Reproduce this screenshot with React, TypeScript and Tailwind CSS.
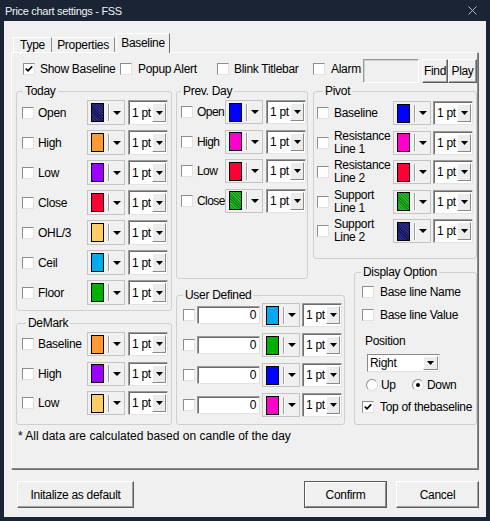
import React from "react";

type Sw =
  | "navy"
  | "orange"
  | "purple"
  | "red"
  | "peach"
  | "sky"
  | "green"
  | "greenDot"
  | "blue"
  | "magenta";

const SWATCH: Record<Sw, string> = {
  navy: "bg-[repeating-linear-gradient(45deg,#2c2c8c_0px,#2c2c8c_1px,#16164e_1px,#16164e_2px)]",
  orange: "bg-[#ff9a33]",
  purple: "bg-[#9900ff]",
  red: "bg-[#ff0033]",
  peach: "bg-[#ffcc66]",
  sky: "bg-[#00aaee]",
  green: "bg-[#00b000]",
  greenDot: "bg-[repeating-linear-gradient(45deg,#2cb42c_0px,#2cb42c_1px,#0c8c0c_1px,#0c8c0c_2px)]",
  blue: "bg-[#0000ff]",
  magenta: "bg-[#ff00cc]",
};

function Check({ on = false }: { on?: boolean }) {
  return (
    <span className="flex h-[12px] w-[12px] shrink-0 items-center justify-center border border-t-[#8d8d8d] border-l-[#8d8d8d] border-r-[#e3e3e3] border-b-[#e3e3e3] bg-white">
      {on && (
        <svg width="8" height="8" viewBox="0 0 8 8">
          <path d="M0.8 3.6L3 5.8L7.2 1.4" fill="none" stroke="#000" strokeWidth="1.7" />
        </svg>
      )}
    </span>
  );
}

function Radio({ on = false }: { on?: boolean }) {
  return (
    <span className="flex h-[12px] w-[12px] shrink-0 items-center justify-center rounded-full border border-t-[#8d8d8d] border-l-[#8d8d8d] border-r-[#e3e3e3] border-b-[#e3e3e3] bg-white">
      {on && <span className="h-[4px] w-[4px] rounded-full bg-black" />}
    </span>
  );
}

function DownArrow() {
  return (
    <svg width="7" height="4" viewBox="0 0 7 4">
      <path d="M0 0H7L3.5 4Z" fill="#000" />
    </svg>
  );
}

function ColorPick({ c }: { c: Sw }) {
  return (
    <div className="flex h-full w-[38px] shrink-0 items-center border border-[#c3c3c3] pl-[3px]">
      <span className={`h-[19px] w-[13px] shrink-0 border border-black ${SWATCH[c]}`} />
      <span className="ml-[4px] h-[17px] w-[2px] shrink-0 border-l border-l-[#a0a0a0] bg-white" />
      <svg className="ml-[3px] shrink-0" width="8" height="4" viewBox="0 0 8 4">
        <path d="M0 0H8L4 4Z" fill="#000" />
      </svg>
    </div>
  );
}

function WidthBox({ className = "" }: { className?: string }) {
  return (
    <div
      className={`flex h-full w-[40px] shrink-0 border border-t-[#9a9a9a] border-l-[#9a9a9a] border-r-[#e3e3e3] border-b-[#e3e3e3] bg-white shadow-[inset_1px_1px_0_#6d6d6d] ${className}`}
    >
      <span className="min-w-0 flex-1 self-center overflow-hidden whitespace-nowrap pl-[3px]">1 pt</span>
      <span className="my-[2px] mr-[1px] flex w-[14px] shrink-0 items-center justify-center border border-t-white border-l-white border-r-[#8a8a8a] border-b-[#8a8a8a] bg-[#ececec]">
        <DownArrow />
      </span>
    </div>
  );
}

function Group({
  title,
  indent,
  className,
  children,
}: {
  title: string;
  indent: string;
  className: string;
  children: React.ReactNode;
}) {
  return (
    <fieldset className={`shrink-0 rounded-[3px] border border-[#cfcfcf] ${className}`}>
      <legend className={`px-[2px] leading-[14px] ${indent}`}>{title}</legend>
      {children}
    </fieldset>
  );
}

function WinButton({ label, className = "", primary = false }: { label: string; className?: string; primary?: boolean }) {
  return (
    <div
      className={`flex shrink-0 items-center justify-center ${
        primary ? "border border-[#5a5a5a]" : "border border-t-white border-l-white border-r-[#5f5f5f] border-b-[#5f5f5f]"
      } ${className}`}
    >
      <div
        className={`flex h-full w-full items-center justify-center bg-[#f0f0f0] ${
          primary
            ? "border border-t-white border-l-white border-r-[#8a8a8a] border-b-[#8a8a8a]"
            : "shadow-[inset_-1px_-1px_0_#a0a0a0]"
        }`}
      >
        {label}
      </div>
    </div>
  );
}

const today: [string, Sw][] = [
  ["Open", "navy"],
  ["High", "orange"],
  ["Low", "purple"],
  ["Close", "red"],
  ["OHL/3", "peach"],
  ["Ceil", "sky"],
  ["Floor", "green"],
];

const demark: [string, Sw][] = [
  ["Baseline", "orange"],
  ["High", "purple"],
  ["Low", "peach"],
];

const prevDay: [string, Sw][] = [
  ["Open", "blue"],
  ["High", "magenta"],
  ["Low", "red"],
  ["Close", "greenDot"],
];

const pivot: [string, string, Sw][] = [
  ["Baseline", "", "blue"],
  ["Resistance", "Line 1", "magenta"],
  ["Resistance", "Line 2", "red"],
  ["Support", "Line 1", "greenDot"],
  ["Support", "Line 2", "navy"],
];

const userDefined: Sw[] = ["sky", "green", "blue", "magenta"];

function LeftRow({ label, c, h }: { label: string; c: Sw; h: string }) {
  return (
    <div className={`flex items-center ${h}`}>
      <Check />
      <span className="ml-[4px] w-[49px] whitespace-nowrap">{label}</span>
      <ColorPick c={c} />
      <WidthBox className="ml-[3px]" />
    </div>
  );
}

export default function App() {
  return (
    <div className="flex h-[521px] w-[490px] flex-col bg-[#1a2434] font-['Liberation_Sans',Arial,sans-serif] text-[12px] leading-[14px] tracking-[-0.3px] text-black">
      {/* title bar */}
      <div className="flex h-[21px] shrink-0 items-center justify-between pl-[5px] pr-[13px] text-[11px] text-[#eef2f6]">
        <span>Price chart settings - FSS</span>
        <svg width="9" height="9" viewBox="0 0 9 9">
          <path d="M0.5 0.5L8.5 8.5M8.5 0.5L0.5 8.5" stroke="#b4bcc6" strokeWidth="1" />
        </svg>
      </div>

      <div className="mx-[4px] mb-[4px] flex flex-1 flex-col bg-[#f0f0f0]">
        <div className="ml-[7px] mt-[12px] w-[467px]">
          {/* tabs */}
          <div className="flex h-[19px] items-end pl-[2px]">
            <div className="flex h-[15px] w-[39px] items-center justify-center border-t border-l border-r border-t-white border-l-white border-r-[#8a8a8a]">
              Type
            </div>
            <div className="flex h-[15px] w-[63px] items-center justify-center border-t border-r border-t-white border-r-[#8a8a8a]">
              Properties
            </div>
            <div className="relative z-10 -mb-[1px] ml-[1px] flex h-[20px] w-[54px] items-start justify-center border-t border-l border-r border-t-white border-l-white border-r-[#6d6d6d] bg-[#f0f0f0] pt-[2px]">
              Baseline
            </div>
          </div>

          {/* panel */}
          <div className="flex h-[417px] flex-col border border-t-white border-l-white border-r-[#8a8a8a] border-b-[#8a8a8a] shadow-[1px_1px_0_#6d6d6d]">
            {/* top row */}
            <div className="mt-[6px] flex h-[24px] items-center pl-[11px]">
              <div className="flex h-[19px] items-center self-start">
                <Check on />
                <span className="ml-[5px] w-[80px] whitespace-nowrap">Show Baseline</span>
                <Check />
                <span className="ml-[6px] w-[79px] whitespace-nowrap">Popup Alert</span>
                <Check />
                <span className="ml-[5px] w-[79px] whitespace-nowrap">Blink Titlebar</span>
                <Check />
                <span className="ml-[6px] w-[32px] whitespace-nowrap">Alarm</span>
              </div>
              <div className="h-full w-[56px] border border-t-[#9a9a9a] border-l-[#9a9a9a] border-r-white border-b-white bg-[#f0f0f0] shadow-[inset_1px_1px_0_#d0d0d0]" />
              <WinButton label="Find" className="ml-[3px] h-full w-[26px]" />
              <WinButton label="Play" className="h-full w-[29px]" />
            </div>

            {/* groups */}
            <div className="mt-[1px] flex pl-[4px]">
              {/* left column */}
              <div className="flex w-[156px] shrink-0 flex-col">
                <Group title="Today" indent="ml-[6px]" className="h-[227px] w-[156px]">
                  <div className="flex flex-col gap-[5px] pl-[5px] pt-[2px]">
                    {today.map(([l, c]) => (
                      <LeftRow key={l} label={l} c={c} h="h-[25px]" />
                    ))}
                  </div>
                </Group>
                <Group title="DeMark" indent="ml-[9px]" className="mt-[5px] h-[109px] w-[156px]">
                  <div className="flex flex-col gap-[5.5px] pl-[5px] pt-[2px]">
                    {demark.map(([l, c]) => (
                      <LeftRow key={l} label={l} c={c} h="h-[24px]" />
                    ))}
                  </div>
                </Group>
              </div>

              {/* middle column */}
              <div className="ml-[4px] flex w-[132px] shrink-0 flex-col">
                <Group title="Prev. Day" indent="ml-[4px]" className="h-[195px] w-[132px]">
                  <div className="flex flex-col gap-[5.5px] pl-[4px] pt-[2px]">
                    {prevDay.map(([l, c]) => (
                      <div key={l} className="flex h-[24px] items-center">
                        <Check />
                        <span className="ml-[4px] w-[28px] whitespace-nowrap tracking-[-0.55px]">{l}</span>
                        <ColorPick c={c} />
                        <WidthBox className="ml-[3px]" />
                      </div>
                    ))}
                  </div>
                </Group>
                <Group title="User Defined" indent="ml-[6px]" className="mt-[9px] h-[137px] w-[169px]">
                  <div className="flex flex-col gap-[6px] pl-[6px] pt-[1px]">
                    {userDefined.map((c, i) => (
                      <div key={i} className="flex h-[24px] items-center">
                        <Check />
                        <div className="ml-[2px] flex h-[18px] w-[63px] items-center justify-end border border-t-[#9a9a9a] border-l-[#9a9a9a] border-r-[#e3e3e3] border-b-[#e3e3e3] bg-white pr-[3px] shadow-[inset_1px_1px_0_#6d6d6d]">
                          0
                        </div>
                        <div className="ml-[2px] h-full">
                          <ColorPick c={c} />
                        </div>
                        <WidthBox className="ml-[2px]" />
                      </div>
                    ))}
                  </div>
                </Group>
              </div>

              {/* right column */}
              <div className="ml-[5px] flex w-[164px] shrink-0 flex-col">
                <Group title="Pivot" indent="ml-[9px]" className="h-[175px] w-[164px]">
                  <div className="flex flex-col gap-[5.5px] pl-[3px] pt-[3px]">
                    {pivot.map(([a, b, c]) => (
                      <div key={a + b} className="flex h-[24px] items-center">
                        <Check />
                        <span className="ml-[5px] flex w-[59px] flex-col whitespace-nowrap leading-[13px]">
                          <span>{a}</span>
                          {b && <span>{b}</span>}
                        </span>
                        <ColorPick c={c} />
                        <WidthBox className="ml-[2px]" />
                      </div>
                    ))}
                  </div>
                </Group>
                <Group title="Display Option" indent="ml-[6px]" className="mt-[6px] h-[160px] w-[123px] self-end">
                  <div className="flex flex-col items-start pl-[7px] pt-[6px]">
                    <div className="flex h-[14px] items-center">
                      <Check />
                      <span className="ml-[6px] whitespace-nowrap">Base line Name</span>
                    </div>
                    <div className="mt-[9px] flex h-[14px] items-center">
                      <Check />
                      <span className="ml-[6px] whitespace-nowrap">Base line Value</span>
                    </div>
                    <span className="ml-[3px] mt-[12px]">Position</span>
                    <div className="ml-[5px] mt-[6px] flex h-[18px] w-[73px] border border-t-[#8a8a8a] border-l-[#8a8a8a] border-r-[#e3e3e3] border-b-[#e3e3e3] bg-white">
                      <span className="flex-1 self-center pl-[2px]">Right</span>
                      <span className="my-[1px] mr-[1px] flex w-[15px] items-center justify-center border border-t-white border-l-white border-r-[#8a8a8a] border-b-[#8a8a8a] bg-[#ececec]">
                        <DownArrow />
                      </span>
                    </div>
                    <div className="ml-[4px] mt-[6px] flex h-[14px] items-center">
                      <Radio />
                      <span className="ml-[3px] w-[31px]">Up</span>
                      <Radio on />
                      <span className="ml-[3px]">Down</span>
                    </div>
                    <div className="mt-[8px] flex h-[14px] items-center">
                      <Check on />
                      <span className="ml-[6px] whitespace-nowrap">Top of thebaseline</span>
                    </div>
                  </div>
                </Group>
              </div>
            </div>

            <div className="mt-[4px] pl-[6px] tracking-normal">* All data are calculated based on candle of the day</div>
          </div>
        </div>

        {/* buttons */}
        <div className="mt-[12px] flex h-[27px] pl-[13px] pr-[7px]">
          <WinButton label="Initalize as default" className="h-full w-[117px]" />
          <div className="flex-1" />
          <WinButton label="Confirm" primary className="h-full w-[83px]" />
          <WinButton label="Cancel" className="ml-[9px] h-full w-[83px]" />
        </div>
      </div>
    </div>
  );
}
